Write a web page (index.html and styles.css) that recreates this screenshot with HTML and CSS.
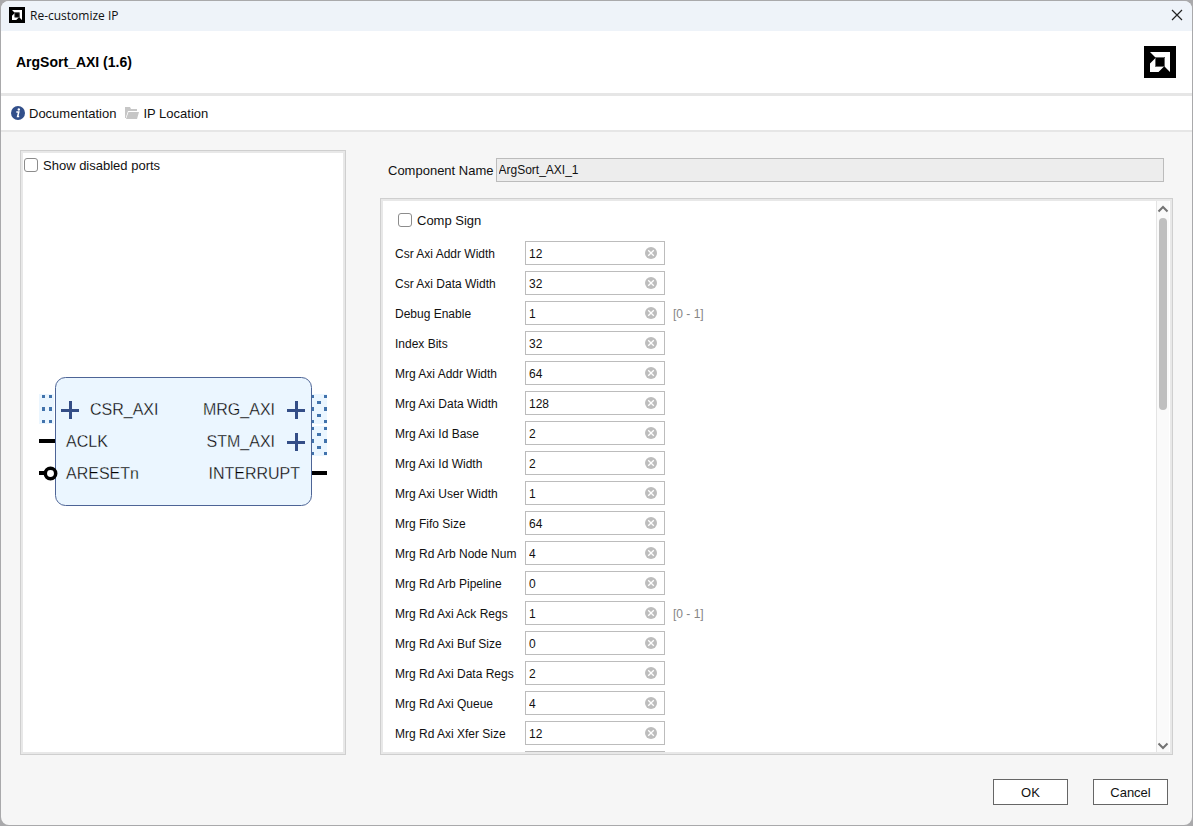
FILE: index.html
```html
<!DOCTYPE html>
<html lang="en">
<head>
<meta charset="utf-8">
<title>Re-customize IP</title>
<link rel="stylesheet" href="styles.css">
</head>
<body>
<svg class="symbols" aria-hidden="true">
  <symbol id="clear" viewBox="0 0 12 12"><circle cx="6" cy="6" r="6" fill="#bdbdbd"/><path d="M3.2 3.2l5.6 5.6M8.800 3.200L3.200 8.800" stroke="#fff" stroke-width="1.300"/></symbol>
  <symbol id="logo" viewBox="0 0 32 32"><path fill="#000" d="M0 0h32v32H0z"/><path fill="#fff" d="M6 6h20v20l-5-5V11H11z"/><path fill="#fff" d="M11.500 12v8.500H20L14.500 26H6v-8.500z"/><path fill="#000" stroke="#666" d="M11.500 11.500h9v9h-9z"/></symbol>
</svg>
<div class="window">
  <header class="titlebar">
    <svg class="title-logo"><use href="#logo"/></svg>
    <span class="title-text">Re-customize IP</span>
    <button class="close" aria-label="Close"><svg width="12" height="12" viewBox="0 0 12 12"><path d="M1 1l10 10M11 1L1 11" stroke="#222" stroke-width="1.2"/></svg></button>
  </header>
  <div class="heading">
    <h1>ArgSort_AXI (1.6)</h1>
    <svg class="brand"><use href="#logo"/></svg>
  </div>
  <nav class="toolbar">
    <a href="#"><svg width="14" height="14" viewBox="0 0 14 14"><circle cx="7" cy="7" r="7" fill="#324f8a"/><circle cx="7.800" cy="3.500" r="1.200" fill="#fff"/><path d="M5.300 6h2.500L6.600 10.500h1.600" fill="none" stroke="#fff" stroke-width="1.500"/></svg><span>Documentation</span></a>
    <a href="#"><svg width="14" height="12" viewBox="0 0 14 12"><path fill="#c6c6c6" d="M0 0h5l1 2h6v2H3L1 10v1H0z"/><path fill="#c6c6c6" d="M3.500 5H14l-2 7H1z"/></svg><span>IP Location</span></a>
  </nav>
  <main class="content">
    <section class="ports">
      <label class="check"><input type="checkbox"><span>Show disabled ports</span></label>
      <div class="diagram">
        <svg width="290" height="130" viewBox="0 0 290 130">
          <path fill="#ebf6ff" d="M1 17h15v30H1zM274 17h15v30H274zM274 49h15v30H274z"/>
          <rect x="17.500" y=".500" width="256" height="128" rx="10" fill="#ebf6ff" stroke="#4d6496"/>
          <g fill="#4273ac">
            <path d="M4 18h3v3H4zM11 18h3v3h-3zM4 30h3v4H4zM11 30h3v4h-3zM4 43h3v3H4zM11 43h3v3h-3z"/>
            <path id="bus" d="M274 18h2v3h-2zM286 18h3v3h-3zM279 24h4v3h-4zM274 30h2v4h-2zM286 30h3v4h-3zM279 37h4v3h-4zM274 43h2v3h-2zM286 43h3v3h-3z"/>
            <use href="#bus" y="32"/>
          </g>
          <path stroke="#344e87" stroke-width="3" d="M23 33.500h18M32.500 24v18M249 33.500h18M258.500 24v18M249 65.500h18M258.500 56v18"/>
          <path stroke="#000" stroke-width="4" d="M1 64h16M1 96h6M274 96h15"/>
          <circle cx="12.500" cy="96.500" r="5.200" fill="#fff" stroke="#000" stroke-width="3.500"/>
          <g class="port-name">
            <text x="52" y="38">CSR_AXI</text><text x="28" y="70">ACLK</text><text x="28" y="102">ARESETn</text>
            <text class="out" x="237" y="38">MRG_AXI</text><text class="out" x="237" y="70">STM_AXI</text><text class="out" x="262" y="102">INTERRUPT</text>
          </g>
        </svg>
      </div>
    </section>
    <section class="settings">
      <div class="component"><label for="name">Component Name</label><input id="name" value="ArgSort_AXI_1" readonly></div>
      <div class="panel">
        <div class="params">
          <label class="check"><input type="checkbox"><span>Comp Sign</span></label>
          <div class="row"><label for="p1">Csr Axi Addr Width</label><div class="field"><input id="p1" value="12"><button aria-label="Clear"><svg><use href="#clear"/></svg></button></div></div>
          <div class="row"><label for="p2">Csr Axi Data Width</label><div class="field"><input id="p2" value="32"><button aria-label="Clear"><svg><use href="#clear"/></svg></button></div></div>
          <div class="row"><label for="p3">Debug Enable</label><div class="field"><input id="p3" value="1"><button aria-label="Clear"><svg><use href="#clear"/></svg></button></div><span class="range">[0 - 1]</span></div>
          <div class="row"><label for="p4">Index Bits</label><div class="field"><input id="p4" value="32"><button aria-label="Clear"><svg><use href="#clear"/></svg></button></div></div>
          <div class="row"><label for="p5">Mrg Axi Addr Width</label><div class="field"><input id="p5" value="64"><button aria-label="Clear"><svg><use href="#clear"/></svg></button></div></div>
          <div class="row"><label for="p6">Mrg Axi Data Width</label><div class="field"><input id="p6" value="128"><button aria-label="Clear"><svg><use href="#clear"/></svg></button></div></div>
          <div class="row"><label for="p7">Mrg Axi Id Base</label><div class="field"><input id="p7" value="2"><button aria-label="Clear"><svg><use href="#clear"/></svg></button></div></div>
          <div class="row"><label for="p8">Mrg Axi Id Width</label><div class="field"><input id="p8" value="2"><button aria-label="Clear"><svg><use href="#clear"/></svg></button></div></div>
          <div class="row"><label for="p9">Mrg Axi User Width</label><div class="field"><input id="p9" value="1"><button aria-label="Clear"><svg><use href="#clear"/></svg></button></div></div>
          <div class="row"><label for="p10">Mrg Fifo Size</label><div class="field"><input id="p10" value="64"><button aria-label="Clear"><svg><use href="#clear"/></svg></button></div></div>
          <div class="row"><label for="p11">Mrg Rd Arb Node Num</label><div class="field"><input id="p11" value="4"><button aria-label="Clear"><svg><use href="#clear"/></svg></button></div></div>
          <div class="row"><label for="p12">Mrg Rd Arb Pipeline</label><div class="field"><input id="p12" value="0"><button aria-label="Clear"><svg><use href="#clear"/></svg></button></div></div>
          <div class="row"><label for="p13">Mrg Rd Axi Ack Regs</label><div class="field"><input id="p13" value="1"><button aria-label="Clear"><svg><use href="#clear"/></svg></button></div><span class="range">[0 - 1]</span></div>
          <div class="row"><label for="p14">Mrg Rd Axi Buf Size</label><div class="field"><input id="p14" value="0"><button aria-label="Clear"><svg><use href="#clear"/></svg></button></div></div>
          <div class="row"><label for="p15">Mrg Rd Axi Data Regs</label><div class="field"><input id="p15" value="2"><button aria-label="Clear"><svg><use href="#clear"/></svg></button></div></div>
          <div class="row"><label for="p16">Mrg Rd Axi Queue</label><div class="field"><input id="p16" value="4"><button aria-label="Clear"><svg><use href="#clear"/></svg></button></div></div>
          <div class="row"><label for="p17">Mrg Rd Axi Xfer Size</label><div class="field"><input id="p17" value="12"><button aria-label="Clear"><svg><use href="#clear"/></svg></button></div></div>
          <div class="row"><label></label><div class="field"></div></div>
        </div>
        <div class="scrollbar">
          <svg width="12" height="8" viewBox="0 0 12 8"><path d="M1.500 6.500L6 2l4.500 4.500" fill="none" stroke="#737373" stroke-width="2"/></svg>
          <div class="track"><div class="thumb"></div></div>
          <svg width="12" height="8" viewBox="0 0 12 8"><path d="M1.500 1.500L6 6l4.500-4.500" fill="none" stroke="#737373" stroke-width="2"/></svg>
        </div>
      </div>
    </section>
  </main>
  <footer class="actions"><button>OK</button><button>Cancel</button></footer>
</div>
</body>
</html>
```
FILE: styles.css
```css
* { box-sizing: border-box; }
body {
  margin: 0;
  height: 100vh;
  padding: 1px;
  background: #a9a9ab;
  color: #111;
  font: 13px/16px "Liberation Sans", Arial, sans-serif;
  overflow: hidden;
}
button, input { font: inherit; color: inherit; margin: 0; }
svg { display: block; flex: none; }
.symbols { position: absolute; width: 0; height: 0; }
.window {
  height: 100%;
  display: flex;
  flex-direction: column;
  background: #f6f6f6;
  border-radius: 8px;
  overflow: hidden;
}
.titlebar {
  flex: none;
  height: 30px;
  display: flex;
  align-items: center;
  gap: 5px;
  padding: 0 7px 2px 8px;
  background: #eef3f9;
}
.title-logo { width: 16px; height: 16px; }
.title-text { flex: 1; padding-top: 2px; font: 12px/16px "Open Sans", "Noto Sans", sans-serif; }
.close { border: 0; background: none; padding: 2px; }
.heading {
  flex: none;
  height: 65px;
  display: flex;
  align-items: center;
  justify-content: space-between;
  padding: 0 16px 0 15px;
  background: #fff;
  border-bottom: 3px solid #e6e6e6;
}
h1 { margin: 0; font-size: 14px; line-height: 16px; color: #000; }
.brand { width: 32px; height: 32px; }
.toolbar {
  flex: none;
  height: 36px;
  display: flex;
  align-items: center;
  gap: 9px;
  padding: 0 10px;
  background: #fff;
  border-bottom: 2px solid #e6e6e6;
}
.toolbar a { display: flex; align-items: center; gap: 4px; color: inherit; text-decoration: none; }
.toolbar span, .check span, .component label { padding-top: 2px; }
.content {
  flex: 1;
  min-height: 0;
  display: flex;
  gap: 34px;
  padding: 18px 19px 0;
}
.ports, .panel {
  background: #fff;
  border: 1px solid #cfcfcf;
  box-shadow: inset 0 0 0 2px #e8e8e8;
}
.ports { width: 326px; flex: none; display: flex; flex-direction: column; padding: 5px 3px; }
.check { display: flex; align-items: center; gap: 5px; height: 18px; }
.check input {
  appearance: none;
  width: 14px;
  height: 14px;
  border: 1px solid #8c8c8c;
  border-radius: 3px;
  background: #fff;
}
.diagram { flex: 1; display: flex; align-items: center; justify-content: center; padding-bottom: 40px; }
.port-name { font-size: 16px; fill: #000; stroke: #ebf6ff; stroke-width: .3px; }
.out { text-anchor: end; }
.settings { flex: 1; min-width: 0; display: flex; flex-direction: column; gap: 16px; padding-top: 8px; }
.component { display: flex; align-items: center; gap: 2px; padding: 0 9px 0 8px; }
.component input {
  flex: 1;
  min-width: 0;
  height: 24px;
  padding: 0 2px;
  border: 1px solid #bcbcbc;
  background: #ededed;
  font-size: 12px;
}
.panel { flex: 1; min-height: 0; display: flex; padding: 2px 3px 2px 3px; }
.params { flex: 1; min-width: 0; overflow: hidden; padding: 10px 11px 0; }
.params .check { padding-left: 3px; margin-bottom: 12px; }
.row { display: flex; align-items: center; height: 24px; margin-bottom: 6px; font-size: 12px; }
.row label { width: 130px; flex: none; padding-top: 2px; white-space: nowrap; }
.field { width: 140px; height: 24px; display: flex; align-items: center; border: 1px solid #bcbcbc; background: #fff; }
.field input { flex: 1; min-width: 0; border: 0; padding: 2px 3px 0; background: none; outline: 0; }
.field button { border: 0; padding: 0 7px 0 0; background: none; }
.field svg { width: 12px; height: 12px; }
.range { margin-left: 8px; padding-top: 2px; color: #858585; }
.scrollbar {
  width: 13px;
  display: flex;
  flex-direction: column;
  align-items: center;
  gap: 5px;
  padding: 4px 0 2px;
  border-left: 1px solid #e4e4e4;
  background: #fafafa;
}
.track { flex: 1; width: 8px; }
.thumb { height: 37%; border-radius: 4px; background: #bfbfbf; }
.actions { flex: none; display: flex; justify-content: flex-end; gap: 25px; padding: 24px 24px 20px; }
.actions button { width: 75px; height: 26px; border: 1px solid #666; background: #fff; padding: 2px 0 0; }
```
